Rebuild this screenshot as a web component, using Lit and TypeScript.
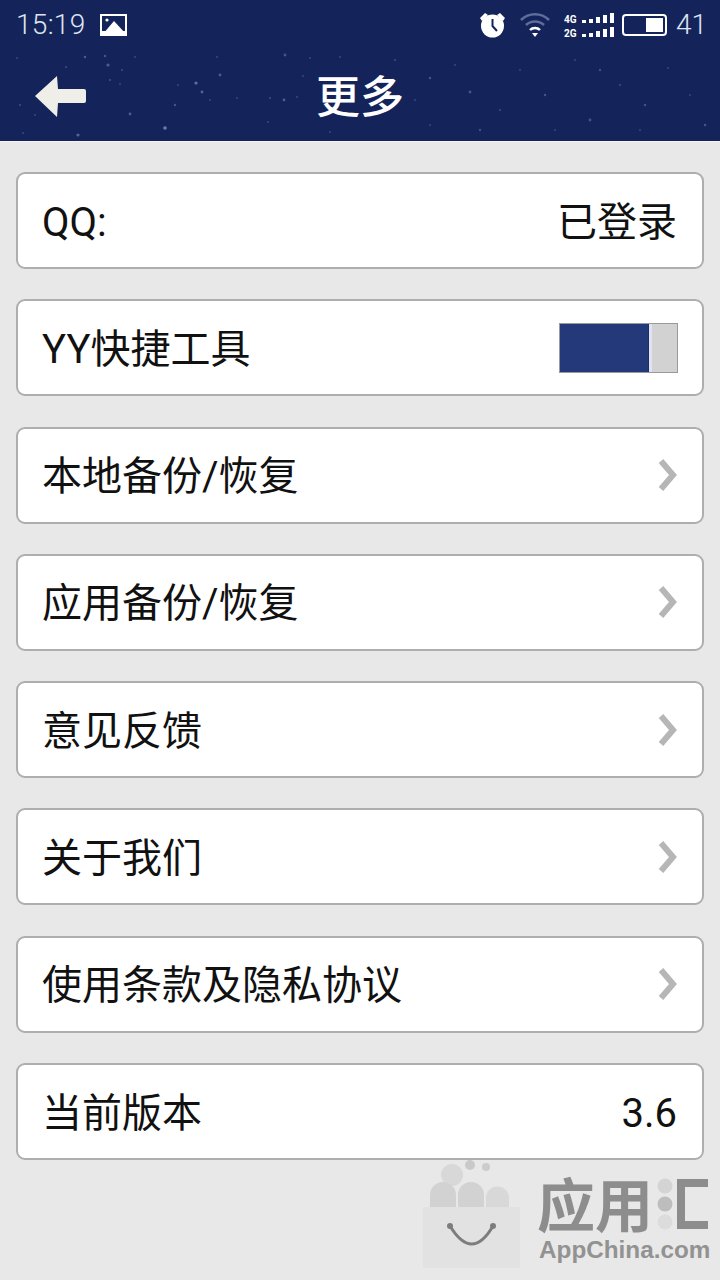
import { LitElement, html, css, svg } from "lit";
import { customElement } from "lit/decorators.js";

const STARS: [number, number, number, number][] = [
  [17,58,1,.3],[66,67,1,.35],[85,57,1.2,.45],[105,56,1.2,.4],[108,65,1.6,.45],[122,70,1,.35],[135,57,1,.3],
  [110,80,1.2,.3],[120,84,1,.3],[178,85,1,.3],[196,83,1.6,.6],[202,92,1.4,.5],[220,75,1.4,.45],[217,57,1,.3],
  [175,105,1.2,.4],[130,114,1.4,.45],[165,128,1.8,.7],[78,135,1.6,.5],[23,133,1,.3],[35,115,1,.3],[20,105,1,.35],
  [285,55,1.4,.4],[310,58,1,.3],[340,57,1,.3],[303,76,1,.3],[270,98,1,.35],[284,100,1.4,.45],[297,97,1,.3],
  [237,98,1,.3],[210,100,1,.3],[268,122,1,.3],[330,132,1,.3],[395,60,1,.35],[430,78,1.2,.4],[455,65,1,.3],
  [470,92,1.4,.4],[500,110,1,.35],[520,70,1,.3],[545,95,1.2,.4],[575,60,1,.3],[590,120,1.4,.4],[620,85,1,.35],
  [645,105,1.2,.4],[668,68,1,.3],[690,95,1,.3],[705,125,1.2,.4],[430,125,1,.3],[480,130,1.2,.35],[555,130,1,.3],
  [415,100,1,.3],[640,130,1,.3],[600,70,1.2,.35],
];

type Row = { label: string; value?: string; kind: "value" | "toggle" | "nav" };
const ROWS: Row[] = [
  { label: "QQ:", value: "已登录", kind: "value" },
  { label: "YY快捷工具", kind: "toggle" },
  { label: "本地备份/恢复", kind: "nav" },
  { label: "应用备份/恢复", kind: "nav" },
  { label: "意见反馈", kind: "nav" },
  { label: "关于我们", kind: "nav" },
  { label: "使用条款及隐私协议", kind: "nav" },
  { label: "当前版本", value: "3.6", kind: "value" },
];

@customElement("app-root")
export class AppRoot extends LitElement {
  static styles = css`
    :host {
      display: block;
      position: relative;
      width: 720px;
      height: 1280px;
      overflow: hidden;
      background: #e8e8e8;
      font-family: Roboto, "Noto Sans CJK SC", sans-serif;
      color: #111;
    }
    .header {
      position: relative;
      height: 141px;
      background: #14245a;
      border-bottom: 1px solid #f4f4f4;
      box-sizing: content-box;
    }
    .stars { position: absolute; inset: 0; }
    .status {
      position: relative;
      height: 50px;
      padding: 0 13px 0 16px;
      display: flex;
      align-items: center;
      color: #dfe4f0;
    }
    .time { font-size: 28px; font-weight: 300; letter-spacing: 0.3px; line-height: 50px; }
    .pic { margin-left: 14px; display: block; }
    .spacer { flex: 1; }
    .sicons { display: flex; align-items: center; }
    .alarm { display: block; }
    .wifi { display: block; margin-left: 13px; }
    .sig { display: block; margin-left: 13px; }
    .bat { display: block; margin-left: 8px; }
    .level { font-size: 28px; font-weight: 300; margin-left: 9px; line-height: 50px; }
    .bar {
      position: relative;
      height: 91px;
      display: flex;
      align-items: center;
      justify-content: center;
    }
    .back { position: absolute; left: 34px; top: 24px; display: block; }
    .title {
      font-family: "Noto Sans CJK SC", sans-serif;
      font-size: 44px;
      font-weight: 500;
      color: #fff;
      line-height: 88px;
      padding-bottom: 3px;
    }
    .list {
      padding: 30px 16px 0;
      display: flex;
      flex-direction: column;
      gap: 30.3px;
    }
    .row {
      height: 97px;
      box-sizing: border-box;
      background: #fff;
      border: 2px solid #aeaeae;
      border-radius: 9px;
      padding: 0 25px 0 24px;
      display: flex;
      align-items: center;
      justify-content: space-between;
      font-size: 40px;
      line-height: 50px;
    }
    .text { padding-top: 4px; }
    .toggle {
      width: 119px;
      height: 50px;
      box-sizing: border-box;
      display: flex;
      margin-right: -1px;
      background: #d2d2d2;
      border: 1px solid #9a9a9a;
    }
    .toggle-on { width: 89px; background: #23397a; border-right: 1px solid #1c2f6a; box-sizing: border-box; }
    .toggle-gap { width: 3px; background: #dfe3f2; }
    .chev { display: block; }
    .mark {
      position: absolute;
      left: 420px;
      top: 1160px;
      width: 300px;
      height: 120px;
    }
    .bag { position: absolute; left: 0; top: 0; display: block; }
    .mark-cn {
      position: absolute;
      left: 117px;
      top: 12px;
      font-family: "Noto Sans CJK SC", sans-serif;
      font-size: 58px;
      font-weight: 700;
      line-height: 60px;
      color: #8d8d8d;
      white-space: nowrap;
    }
    .mark-dots { position: absolute; left: 236px; top: 17px; display: block; }
    .mark-h { position: absolute; left: 257px; top: 19px; display: block; }
    .mark-en {
      position: absolute;
      left: 119px;
      top: 78px;
      font-family: "Liberation Sans", sans-serif;
      font-size: 24.3px;
      font-weight: 700;
      line-height: 24px;
      color: #929292;
      white-space: nowrap;
    }
  `;

  private chevron() {
    return html`<svg class="chev" width="22" height="34" viewBox="0 0 22 34">
      <path d="M6 3 L18 17 L6 31" fill="none" stroke="#b6b6b6" stroke-width="6"/>
    </svg>`;
  }

  private row(r: Row) {
    const tail =
      r.kind === "toggle"
        ? html`<div class="toggle"><div class="toggle-on"></div><div class="toggle-gap"></div></div>`
        : r.kind === "nav"
        ? this.chevron()
        : html`<span class="text">${r.value}</span>`;
    return html`<div class="row"><span class="text">${r.label}</span>${tail}</div>`;
  }

  render() {
    return html`
      <div class="header">
        <svg class="stars" width="720" height="141">
          ${STARS.map(([x, y, r, o]) => svg`<circle cx=${x} cy=${y} r=${r} fill="#8fa3cc" opacity=${o}></circle>`)}
        </svg>
        <div class="status">
          <span class="time">15:19</span>
          <svg class="pic" width="27" height="22" viewBox="0 0 27 22">
            <rect width="27" height="22" fill="#fff"/>
            <rect x="2" y="2" width="23" height="15" fill="#14245a"/>
            <circle cx="7" cy="6" r="1.6" fill="#fff"/>
            <path d="M3 20 L14 7 L25 19 L25 20 Z" fill="#fff"/>
          </svg>
          <div class="spacer"></div>
          <div class="sicons">
            <svg class="alarm" width="27" height="28" viewBox="0 0 27 28">
              <path d="M1 7 L6 2 L9 4 L3 10 Z M26 7 L21 2 L18 4 L24 10 Z" fill="#fff"/>
              <circle cx="13.5" cy="15" r="11.5" fill="#fff"/>
              <path d="M13.5 8 V15 L18 20" fill="none" stroke="#14245a" stroke-width="2"/>
            </svg>
            <svg class="wifi" width="32" height="26" viewBox="0 0 32 26">
              <path d="M2 8 A20 20 0 0 1 30 8" fill="none" stroke="#5f6d9c" stroke-width="2.5"/>
              <path d="M7 13 A13 13 0 0 1 25 13" fill="none" stroke="#5f6d9c" stroke-width="2.5"/>
              <path d="M11 18 A7 7 0 0 1 21 18" fill="none" stroke="#fff" stroke-width="2.5"/>
              <path d="M13 21 H19 L16 25 Z" fill="#fff"/>
            </svg>
            <svg class="sig" width="50" height="26" viewBox="0 0 50 26">
              <g fill="#fff">
                <rect x="18" y="8" width="4" height="3"/><rect x="25" y="7" width="4" height="4"/><rect x="32" y="5" width="4" height="6"/><rect x="39" y="3" width="4" height="8"/><rect x="46" y="1" width="4" height="10"/>
                <rect x="18" y="22" width="4" height="3"/><rect x="25" y="21" width="4" height="4"/><rect x="32" y="19" width="4" height="6"/><rect x="39" y="17" width="4" height="8"/><rect x="46" y="15" width="4" height="10"/>
                <text x="0" y="11" font-size="10" font-weight="700" font-family="Roboto">4G</text>
                <text x="0" y="25" font-size="10" font-weight="700" font-family="Roboto">2G</text>
              </g>
            </svg>
            <svg class="bat" width="45" height="24" viewBox="0 0 45 24">
              <rect x="1" y="2" width="43" height="20" rx="3" fill="none" stroke="#fff" stroke-width="2"/>
              <rect x="24" y="5" width="17" height="14" fill="#fff"/>
            </svg>
            <span class="level">41</span>
          </div>
        </div>
        <div class="bar">
          <svg class="back" width="54" height="44" viewBox="0 0 54 44">
            <path d="M1 22 L23 2 L24 15 L50 15 Q52 15 52 17 L52 27 Q52 29 50 29 L24 29 L23 43 Z" fill="#f0eee8"/>
          </svg>
          <span class="title">更多</span>
        </div>
      </div>
      <div class="list">${ROWS.map((r) => this.row(r))}</div>
      <div class="mark">
        <svg class="bag" width="110" height="120" viewBox="0 0 110 120">
          <rect x="3" y="47" width="97" height="61" fill="#e2e2e2"/>
          <circle cx="32" cy="15" r="11" fill="#d8d8d8"/>
          <circle cx="50" cy="5" r="5" fill="#c9c9c9"/>
          <circle cx="66" cy="7" r="4" fill="#cccccc"/>
          <path d="M10 47 V35 A13 13 0 0 1 36 35 V47 Z" fill="#d2d2d2"/>
          <path d="M38 47 V35 A13 13 0 0 1 64 35 V47 Z" fill="#d2d2d2"/>
          <path d="M66 47 V38 A11.5 11.5 0 0 1 89 38 V47 Z" fill="#d8d8d8"/>
          <path d="M30 66 Q52 102 73 66" fill="none" stroke="#7d7d7d" stroke-width="3"/>
          <circle cx="30" cy="66" r="3" fill="#7d7d7d"/><circle cx="73" cy="66" r="3" fill="#7d7d7d"/>
        </svg>
        <span class="mark-cn">应用</span>
        <svg class="mark-dots" width="18" height="54" viewBox="0 0 18 54">
          <circle cx="9" cy="9" r="7.5" fill="#d4d4d4"/>
          <circle cx="9" cy="27" r="7.5" fill="#bdbdbd"/>
          <circle cx="9" cy="45" r="7.5" fill="#dcdcdc"/>
        </svg>
        <svg class="mark-h" width="33" height="50" viewBox="0 0 33 50">
          <path d="M31 4 H4 V46 H31" fill="none" stroke="#8d8d8d" stroke-width="8"/>
        </svg>
        <span class="mark-en">AppChina.com</span>
      </div>
    `;
  }
}
